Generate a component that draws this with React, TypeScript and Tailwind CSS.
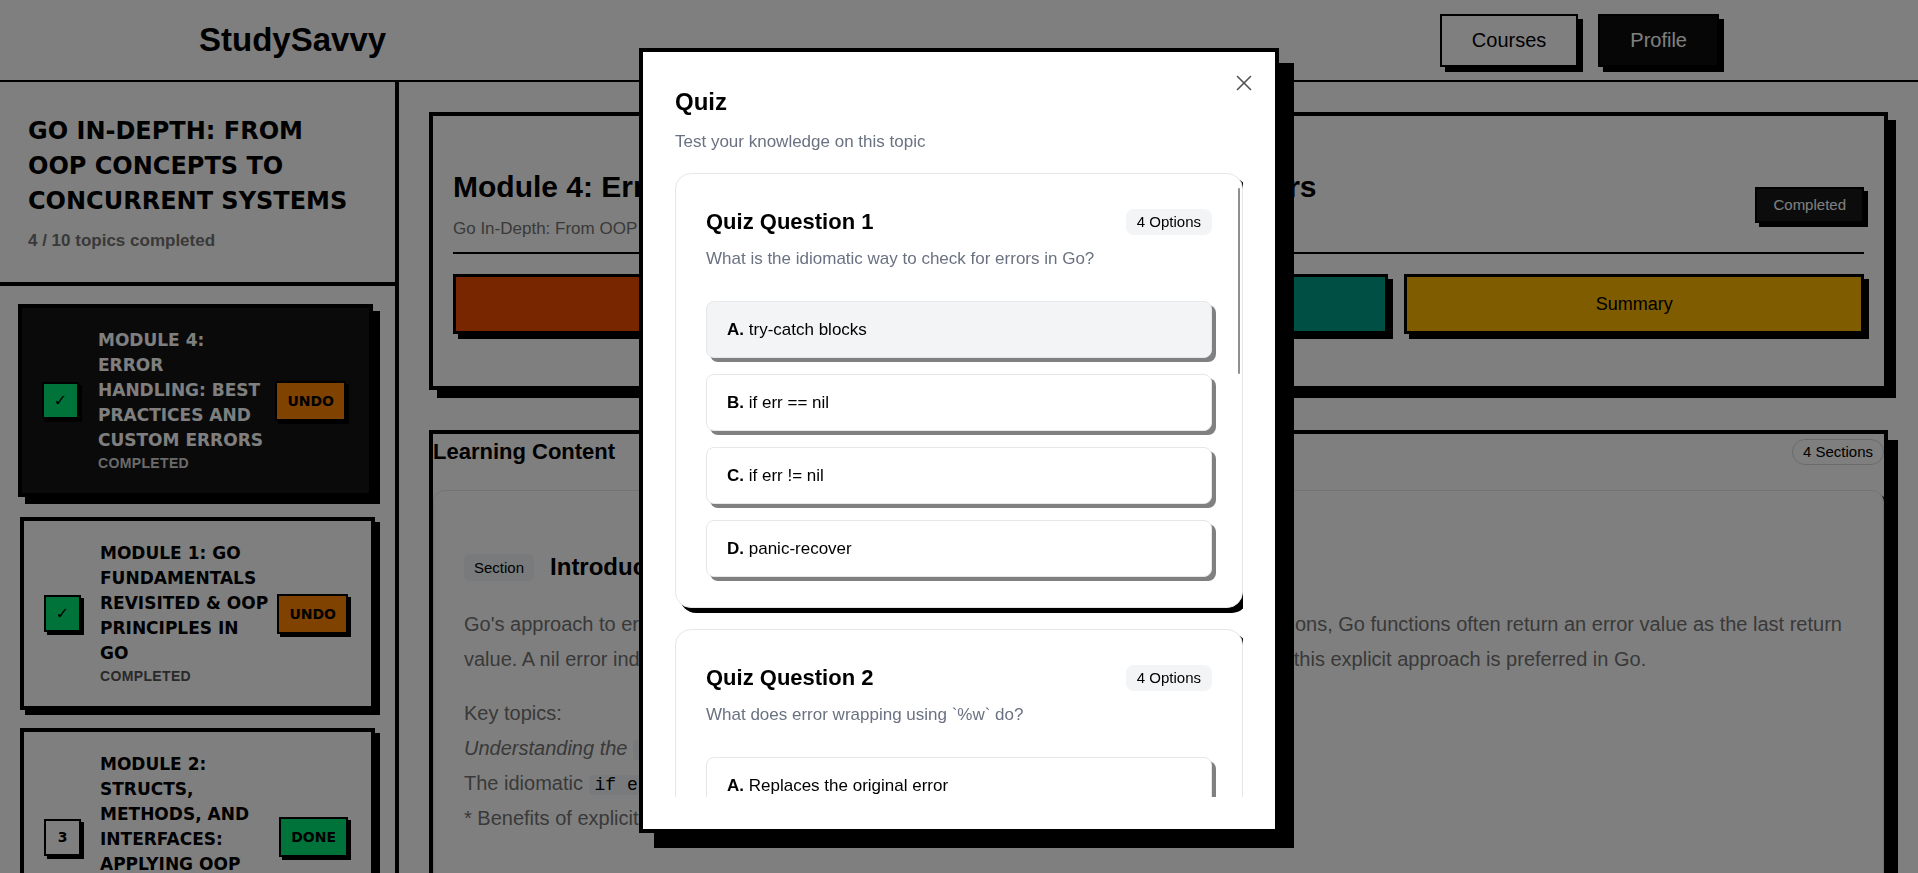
import { X } from "lucide-react";

interface Module {
  id: number;
  title: string;
  status: string;
  done: boolean;
}

interface Question {
  text: string;
  options: string[];
}

const modules: Module[] = [
  { id: 4, title: "Module 4: Error Handling: Best Practices and Custom Errors", status: "Completed", done: true },
  { id: 1, title: "Module 1: Go Fundamentals Revisited & OOP Principles in Go", status: "Completed", done: true },
  { id: 2, title: "Module 2: Structs, Methods, and Interfaces: Applying OOP Concepts", status: "Not started", done: false },
  { id: 3, title: "Module 3: Concurrency Basics: Goroutines and Channels", status: "Not started", done: false },
  { id: 5, title: "Module 5: Testing and Benchmarking Go Code", status: "Not started", done: false },
];

const questions: Question[] = [
  {
    text: "What is the idiomatic way to check for errors in Go?",
    options: ["try-catch blocks", "if err == nil", "if err != nil", "panic-recover"],
  },
  {
    text: "What does error wrapping using `%w` do?",
    options: [
      "Replaces the original error",
      "Adds context while preserving the original error",
      "Converts the error into a string",
      "Silently ignores the error",
    ],
  },
  {
    text: "Which method must a custom error type implement?",
    options: ["String() string", "Error() string", "Message() string", "Unwrap() error"],
  },
];

const letters = ["A", "B", "C", "D"];

function ModuleCard({ m, index, active }: { m: Module; index: number; active: boolean }) {
  return (
    <div
      className={
        active
          ? "flex items-center border-4 border-black bg-[#141414] py-5 pl-5 pr-[23px] text-white shadow-[7px_7px_0_0_#000] -translate-x-[2px] -translate-y-[2px]"
          : "flex items-center border-4 border-black bg-white py-5 pl-5 pr-[23px] text-black shadow-[5px_5px_0_0_#000]"
      }
    >
      <div
        className={
          m.done
            ? "flex h-[37px] w-[37px] shrink-0 items-center justify-center border-2 border-black bg-[#00e676] font-['DejaVu_Sans',sans-serif] text-base text-black shadow-[3px_3px_0_0_#000]"
            : "flex h-[37px] w-[37px] shrink-0 items-center justify-center border-2 border-black bg-white font-['DejaVu_Sans',sans-serif] text-sm font-bold text-black shadow-[3px_3px_0_0_#000]"
        }
      >
        {m.done ? "✓" : index + 1}
      </div>
      <div className="ml-[19px] w-[170px]">
        <div className="font-['DejaVu_Sans',sans-serif] text-[17px] font-bold uppercase leading-[25px]">{m.title}</div>
        <div
          className={
            active
              ? "text-sm font-bold uppercase leading-5 tracking-wide text-neutral-300"
              : "text-sm font-bold uppercase leading-5 tracking-wide text-neutral-600"
          }
        >
          {m.status}
        </div>
      </div>
      <button
        className={
          m.done
            ? "ml-auto border-2 border-black bg-[#ff8500] px-2.5 py-2 font-['DejaVu_Sans',sans-serif] text-[14px] font-bold leading-5 text-black shadow-[3px_3px_0_0_#000]"
            : "ml-auto border-2 border-black bg-[#00e676] px-2.5 py-2 font-['DejaVu_Sans',sans-serif] text-[14px] font-bold leading-5 text-black shadow-[3px_3px_0_0_#000]"
        }
      >
        {m.done ? "UNDO" : "DONE"}
      </button>
    </div>
  );
}

function QuestionCard({ q, n }: { q: Question; n: number }) {
  return (
    <div className="rounded-2xl border border-gray-200 bg-white px-[30px] pb-[30px] pt-[34px] shadow-[5px_5px_0_0_#000]">
      <div className="flex items-center justify-between">
        <h3 className="text-[22px] font-bold leading-7">Quiz Question {n}</h3>
        <span className="rounded-lg bg-gray-100 px-[11px] py-[3px] text-[15px] leading-5">
          {q.options.length} Options
        </span>
      </div>
      <p className="mt-[11px] text-[17px] leading-6 text-gray-500">{q.text}</p>
      <div className="mt-[30px] flex flex-col gap-4">
        {q.options.map((opt, i) => (
          <div
            key={i}
            className={
              i === 0 && n === 1
                ? "rounded-lg border border-gray-200 bg-gray-100 px-5 py-[15.5px] text-[17px] leading-6 shadow-[4px_4px_0_0_#808080]"
                : "rounded-lg border border-gray-200 bg-white px-5 py-[15.5px] text-[17px] leading-6 shadow-[4px_4px_0_0_#808080]"
            }
          >
            <span className="font-bold">{letters[i]}.</span> {opt}
          </div>
        ))}
      </div>
    </div>
  );
}

export default function App() {
  return (
    <div className="min-h-screen bg-white font-['Liberation_Sans',Arial,sans-serif] text-black">
      {/* Header */}
      <header className="border-b-2 border-black bg-white">
        <div className="mx-auto flex h-20 max-w-[1536px] items-center justify-between px-2">
          <span className="text-[33px] font-bold">StudySavvy</span>
          <nav className="flex gap-5">
            <button className="h-[53px] border-2 border-black bg-white px-[30px] text-xl shadow-[5px_5px_0_0_#000]">
              Courses
            </button>
            <button className="h-[53px] border-2 border-black bg-[#0c0c0c] px-[30px] text-xl text-white shadow-[5px_5px_0_0_#000]">
              Profile
            </button>
          </nav>
        </div>
      </header>

      <div className="flex">
        {/* Sidebar */}
        <aside className="w-[399px] shrink-0 border-r-4 border-black bg-white">
          <div className="border-b-4 border-black px-7 pb-[29px] pt-8">
            <h2 className="max-w-[327px] font-['DejaVu_Sans',sans-serif] text-2xl font-bold uppercase leading-[35px]">
              Go In-Depth: From OOP Concepts to Concurrent Systems
            </h2>
            <p className="mt-[10px] text-[17px] font-bold leading-6 text-neutral-500">4 / 10 topics completed</p>
          </div>
          <div className="flex flex-col gap-[18px] p-5">
            {modules.map((m, i) => (
              <ModuleCard key={m.id} m={m} index={i} active={i === 0} />
            ))}
          </div>
        </aside>

        {/* Main */}
        <main className="min-w-0 flex-1 px-[30px] pb-10 pt-[30px]">
          <section className="border-4 border-black bg-white px-5 pb-[52px] pt-[53px] shadow-[8px_8px_0_0_#000]">
            <div className="flex items-center justify-between border-b-2 border-black pb-[11px]">
              <div>
                <h1 className="text-3xl font-bold leading-9">
                  Module 4: Error Handling: Best Practices and Custom Errors
                </h1>
                <p className="mt-3 text-[17px] leading-6 text-neutral-500">
                  Go In-Depth: From OOP Concepts to Concurrent Systems
                </p>
              </div>
              <span className="border-2 border-black bg-[#181818] px-4 py-[6px] text-[15px] leading-5 text-white shadow-[4px_4px_0_0_#000]">
                Completed
              </span>
            </div>
            <div className="mt-5 grid grid-cols-3 gap-4">
              <button className="flex h-[60px] items-center justify-center border-[3px] border-black bg-[#f04d00] text-lg shadow-[5px_5px_0_0_#000]">
                Content
              </button>
              <button className="flex h-[60px] items-center justify-center border-[3px] border-black bg-[#009e8a] text-lg shadow-[5px_5px_0_0_#000]">
                Quiz
              </button>
              <button className="flex h-[60px] items-center justify-center border-[3px] border-black bg-[#ffb800] text-lg shadow-[5px_5px_0_0_#000]">
                Summary
              </button>
            </div>
          </section>

          <section className="mt-10 border-4 border-black bg-white pb-6 shadow-[10px_10px_0_0_#000]">
            <div className="flex items-center justify-between pt-1">
              <h2 className="text-[22px] font-bold leading-7">Learning Content</h2>
              <span className="rounded-full border border-gray-300 px-[10px] py-[2px] text-[15px] leading-5">
                4 Sections
              </span>
            </div>
            <div className="mt-6 rounded-xl border border-gray-200 bg-white px-[30px] pb-32 pt-[60px] shadow-[4px_4px_0_0_#000]">
              <div className="flex items-center gap-4">
                <span className="rounded-md bg-gray-100 px-2.5 py-1 text-[15px] leading-[19px]">Section</span>
                <h3 className="text-2xl font-bold leading-8">Introduction to Error Handling in Go</h3>
              </div>
              <div className="mt-6 text-xl leading-[35px] text-neutral-500">
                <p className="mb-[19px]">
                  Go's approach to error handling is explicit and straightforward. Unlike languages using
                  exceptions, Go functions often return an error value as the last return value. A nil error
                  indicates success, while a non-nil value means failure. Let's now look at why this explicit
                  approach is preferred in Go.
                </p>
                <p>Key topics:</p>
                <p className="italic">
                  Understanding the{" "}
                  <code className="rounded bg-gray-100 px-1.5 font-['Liberation_Mono',monospace] text-lg not-italic text-black">
                    error
                  </code>{" "}
                  interface
                </p>
                <p>
                  The idiomatic{" "}
                  <code className="rounded bg-gray-100 px-1.5 font-['Liberation_Mono',monospace] text-lg text-black">
                    if err != nil
                  </code>{" "}
                  check
                </p>
                <p>* Benefits of explicit error handling</p>
              </div>
            </div>
          </section>
        </main>
      </div>

      {/* Overlay */}
      <div className="fixed inset-0 bg-black/50" />

      {/* Quiz dialog */}
      <div className="fixed left-1/2 top-[48px] flex h-[785px] w-[640px] -translate-x-1/2 flex-col border-4 border-black bg-white p-8 shadow-[15px_15px_0_0_#000]">
        <button className="absolute right-[18px] top-[18px] text-neutral-600">
          <X size={26} strokeWidth={1.5} />
        </button>
        <h2 className="mt-[2px] text-2xl font-bold leading-8">Quiz</h2>
        <p className="mt-3 text-[17px] leading-6 text-gray-500">Test your knowledge on this topic</p>
        <div className="relative mt-[19px] min-h-0 flex-1 overflow-hidden">
          <div className="flex flex-col gap-[21px]">
            {questions.map((q, i) => (
              <QuestionCard key={i} q={q} n={i + 1} />
            ))}
          </div>
          <div className="absolute right-[3px] top-[15px] h-[186px] w-[2px] rounded-full bg-[#8f8f8f]" />
        </div>
      </div>
    </div>
  );
}
